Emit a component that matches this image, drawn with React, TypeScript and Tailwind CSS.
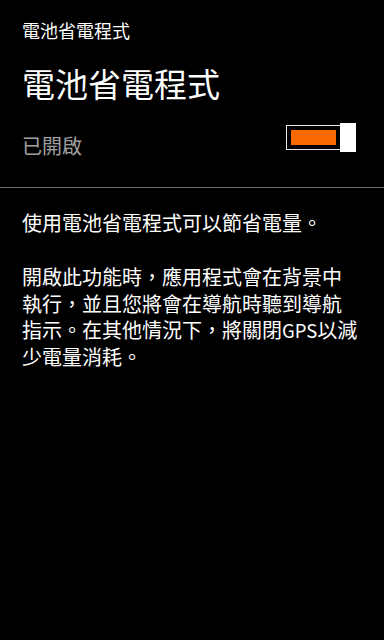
export default function App() {
  return (
    <div
      className="min-h-[640px] w-full bg-black text-white"
      style={{ fontFamily: '"Noto Sans CJK TC", "Noto Sans", sans-serif' }}
    >
      {/* Header */}

      <div className="px-[22px] pt-[21px]">
        <p className="text-[18px] leading-[18px]">電池省電程式</p>

        <h1 className="mt-[28px] text-[33px] leading-[33px]">電池省電程式</h1>

        {/* Toggle row */}

        <div className="mt-[23px] flex items-start justify-between pr-[6px]">
          <p className="mt-[13px] text-[20px] leading-[20px] text-[#a0a0a0]">已開啟</p>

          <div className="flex items-center">
            <div className="flex h-[25px] w-[55px] items-center border border-[#e6e6e6] p-[4px]">
              <div className="h-full w-full bg-[#fa6800]" />
            </div>
            <div className="-ml-[1px] h-[29px] w-[16px] bg-white" />
          </div>
        </div>
      </div>

      {/* Divider */}

      <div className="mt-[31px] h-px w-full bg-[#6b6b6b]" />

      {/* Description */}

      <div className="pl-[22px] pr-[23px] pt-[22px] text-[20px] leading-[26.5px]">
        <p>使用電池省電程式可以節省電量。</p>
        <p className="mt-[27.5px]">
          開啟此功能時，應用程式會在背景中執行，並且您將會在導航時聽到導航指示。在其他情況下，將關閉
          <span className="text-[18.5px]">GPS</span>
          以減少電量消耗。
        </p>
      </div>
    </div>
  );
}
